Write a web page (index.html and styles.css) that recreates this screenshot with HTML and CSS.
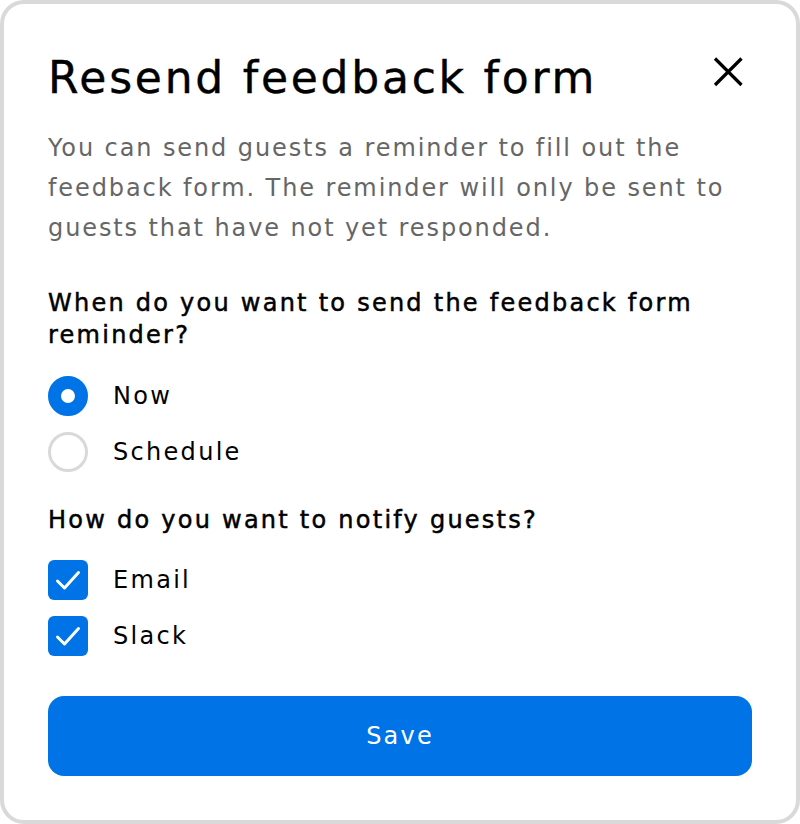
FILE: index.html
```html
<!DOCTYPE html>
<html lang="en">
<head>
  <meta charset="UTF-8" />
  <meta name="viewport" content="width=device-width, initial-scale=1.0"/>
  <title>Resend feedback form</title>
  <link rel="stylesheet" href="styles.css">
</head>
<body>
  <div class="dialog">
    <!-- Header with title and close button -->
    <div class="dialog-header">
      <h1>Resend feedback form</h1>
      <button class="close-btn" type="button" aria-label="Close">
        <svg width="44" height="44" viewBox="0 0 44 44" fill="none" stroke="#000" stroke-width="3.2">
          <path d="M7 8.5 L33.5 35 M33.5 8.5 L7 35" />
        </svg>
      </button>
    </div>

    <p class="description">
      You can send guests a reminder to fill out the feedback form. The reminder will only be sent to guests that have not yet responded.
    </p>

    <!-- When to send -->
    <div class="field">
      <h2>When do you want to send the feedback form reminder?</h2>
      <div class="options">
        <label class="option">
          <span class="radio checked"></span>
          Now
        </label>
        <label class="option">
          <span class="radio"></span>
          Schedule
        </label>
      </div>
    </div>

    <!-- How to notify -->
    <div class="field notify">
      <h2>How do you want to notify guests?</h2>
      <div class="options">
        <label class="option">
          <span class="checkbox">
            <svg width="40" height="40" viewBox="0 0 40 40" fill="none" stroke="#fff" stroke-width="3" stroke-linecap="round" stroke-linejoin="round">
              <path d="M9.5 21 L16.5 28 L30.5 12.5" />
            </svg>
          </span>
          Email
        </label>
        <label class="option">
          <span class="checkbox">
            <svg width="40" height="40" viewBox="0 0 40 40" fill="none" stroke="#fff" stroke-width="3" stroke-linecap="round" stroke-linejoin="round">
              <path d="M9.5 21 L16.5 28 L30.5 12.5" />
            </svg>
          </span>
          Slack
        </label>
      </div>
    </div>

    <button class="save-btn" type="button">Save</button>
  </div>
</body>
</html>
```

FILE: styles.css
```css
/* Basic Reset */
* {
  margin: 0;
  padding: 0;
  box-sizing: border-box;
}

body {
  font-family: "DejaVu Sans", Inter, sans-serif;
  background-color: #fff;
  color: #000;
  letter-spacing: 2px;
}

/* Dialog card */
.dialog {
  width: 800px;
  border: 4px solid #d9d9d9;
  border-radius: 24px;
  padding: 46px 44px 44px;
  display: flex;
  flex-direction: column;
}

.dialog-header {
  display: flex;
  justify-content: space-between;
  align-items: flex-start;
}

.dialog-header h1 {
  font-size: 44px;
  line-height: 56px;
  font-weight: normal;
  letter-spacing: 2.75px;
  -webkit-text-stroke: 0.4px #000;
}

.close-btn {
  background: none;
  border: none;
  cursor: pointer;
  display: flex;
}

.description {
  margin-top: 22px;
  font-size: 24px;
  line-height: 40px;
  color: #666;
  letter-spacing: 1.9px;
}

/* Form fields */
.field {
  margin-top: 39px;
}

.field.notify {
  margin-top: 32px;
}

.field h2 {
  font-size: 24px;
  line-height: 32px;
  font-weight: normal;
  letter-spacing: 2.25px;
  -webkit-text-stroke: 0.5px #000;
}

.options {
  margin-top: 25px;
  display: flex;
  flex-direction: column;
  gap: 16px;
}

.notify .options {
  margin-top: 24px;
}

.option {
  display: flex;
  align-items: center;
  gap: 25px;
  height: 40px;
  font-size: 24px;
  letter-spacing: 2.3px;
  cursor: pointer;
}

.radio {
  width: 40px;
  height: 40px;
  border-radius: 50%;
  border: 3px solid #d9d9d9;
}

.radio.checked {
  border: 13px solid #0073e6;
}

.checkbox {
  width: 40px;
  height: 40px;
  border-radius: 6px;
  background-color: #0073e6;
  display: flex;
}

/* Save button */
.save-btn {
  margin-top: 40px;
  height: 80px;
  border: none;
  border-radius: 16px;
  background-color: #0073e6;
  color: #fff;
  font-family: inherit;
  font-size: 24px;
  letter-spacing: 2.2px;
  cursor: pointer;
}
```
